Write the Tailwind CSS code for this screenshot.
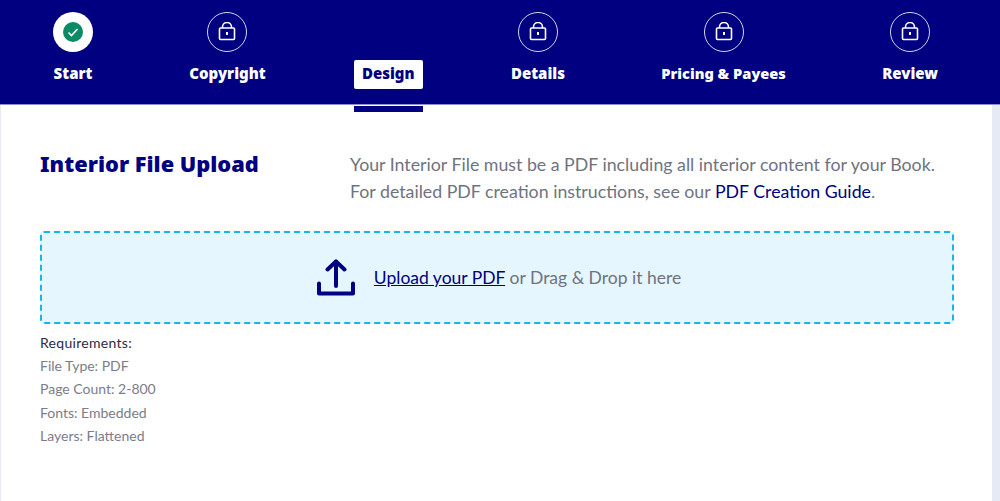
<!DOCTYPE html>
<html lang="en">

<head>
    <meta charset="UTF-8">
    <title>Interior File Upload</title>
    <script src="https://cdn.jsdelivr.net/npm/@tailwindcss/browser@4"></script>
</head>

<body class="bg-white font-['Lato',sans-serif] h-[501px] overflow-hidden">

    <!-- Steps -->
    <nav class="h-[105px] bg-[#000080] border-b border-[#8f8fd0] pl-[53px] pr-[62px] pt-3 flex justify-between font-['Noto_Sans',sans-serif]">
        <div class="flex flex-col items-center">
            <div class="w-10 h-10 rounded-full bg-white grid place-items-center">
                <svg class="w-5 h-5" viewBox="0 0 20 20">
                    <circle cx="10" cy="10" r="10" fill="#0b8a66" />
                    <path d="M5.5 10.5l3 3 6-6.5" fill="none" stroke="white" stroke-width="1.6" />
                </svg>
            </div>
            <span class="mt-3 text-[15px] leading-[18px] font-black text-white">Start</span>
        </div>
        <div class="flex flex-col items-center">
            <div class="w-10 h-10 rounded-full border border-[#d5d5ec] grid place-items-center">
                <svg class="w-[18px] h-5 text-white" viewBox="0 0 18 20" fill="none" stroke="currentColor" stroke-width="1.6">
                    <rect x="1.500" y="6" width="15" height="11.500" rx="1" />
                    <path d="M4.500 6V5a4.500 4.500 0 0 1 9 0v1" />
                    <path d="M9 10v3" stroke-width="2" />
                </svg>
            </div>
            <span class="mt-3 text-[15px] leading-[18px] font-black text-white">Copyright</span>
        </div>
        <div class="relative flex flex-col items-center">
            <div class="h-10"></div>
            <span class="mt-2 -mx-2 px-2 pt-1 pb-[7px] rounded-[2px] bg-white text-[15px] leading-[18px] font-black text-[#000080]">Design</span>
            <span class="absolute -left-2 -right-2 top-[94px] h-[6px] bg-[#000080]"></span>
        </div>
        <div class="flex flex-col items-center">
            <div class="w-10 h-10 rounded-full border border-[#d5d5ec] grid place-items-center">
                <svg class="w-[18px] h-5 text-white" viewBox="0 0 18 20" fill="none" stroke="currentColor" stroke-width="1.6">
                    <rect x="1.500" y="6" width="15" height="11.500" rx="1" />
                    <path d="M4.500 6V5a4.500 4.500 0 0 1 9 0v1" />
                    <path d="M9 10v3" stroke-width="2" />
                </svg>
            </div>
            <span class="mt-3 text-[15px] leading-[18px] font-black text-white">Details</span>
        </div>
        <div class="flex flex-col items-center">
            <div class="w-10 h-10 rounded-full border border-[#d5d5ec] grid place-items-center">
                <svg class="w-[18px] h-5 text-white" viewBox="0 0 18 20" fill="none" stroke="currentColor" stroke-width="1.6">
                    <rect x="1.500" y="6" width="15" height="11.500" rx="1" />
                    <path d="M4.500 6V5a4.500 4.500 0 0 1 9 0v1" />
                    <path d="M9 10v3" stroke-width="2" />
                </svg>
            </div>
            <span class="mt-3 text-[14.6px] leading-[18px] font-black text-white">Pricing &amp; Payees</span>
        </div>
        <div class="flex flex-col items-center">
            <div class="w-10 h-10 rounded-full border border-[#d5d5ec] grid place-items-center">
                <svg class="w-[18px] h-5 text-white" viewBox="0 0 18 20" fill="none" stroke="currentColor" stroke-width="1.6">
                    <rect x="1.500" y="6" width="15" height="11.500" rx="1" />
                    <path d="M4.500 6V5a4.500 4.500 0 0 1 9 0v1" />
                    <path d="M9 10v3" stroke-width="2" />
                </svg>
            </div>
            <span class="mt-3 text-[15px] leading-[18px] font-black text-white">Review</span>
        </div>
    </nav>

    <!-- Content -->
    <main class="h-[396px] mr-2 border-l border-[#e6eaf4] pl-[39px] pr-[38px]">
        <div class="flex pt-[46px]">
            <h1 class="w-[310px] -mt-px font-['Noto_Sans',sans-serif] text-[21.8px] leading-[27px] font-black text-[#000080]">Interior File Upload</h1>
            <p class="text-[17.75px] leading-[27px] text-[#6f7380]">
                Your Interior File must be a PDF including all interior content for your Book.<br>
                For detailed PDF creation instructions, see our <a class="text-[#000080]" href="#">PDF Creation Guide</a>.
            </p>
        </div>

        <div class="mt-[26px] h-[93px] bg-[#e6f6fe] border-2 border-dashed border-[#16b5ee] rounded-sm flex items-center justify-center gap-[19px] pl-1">
            <svg class="w-[38px] h-[37px] text-[#000080]" viewBox="0 0 38 37" fill="none" stroke="currentColor" stroke-width="4" stroke-linecap="round" stroke-linejoin="round">
                <path d="M19 2.500V27" />
                <path d="M10.500 10.500L19 2.500l8.500 8" />
                <path d="M2 24.500V34.500H36V24.500" />
            </svg>
            <p class="mt-[2px] text-[17.5px] text-[#6f7380]"><a class="text-[#000080] underline" href="#">Upload your PDF</a> or Drag &amp; Drop it here</p>
        </div>

        <div class="mt-[7px] text-[14px] leading-[23.2px] text-[#7a7d89]">
            <p class="text-[#2b2b45] tracking-[0.3px]">Requirements:</p>
            <p>File Type: PDF</p>
            <p>Page Count: 2-800</p>
            <p>Fonts: Embedded</p>
            <p>Layers: Flattened</p>
        </div>
    </main>
    <div class="fixed top-[105px] right-0 bottom-0 w-2 bg-[#e6eaf4]"></div>

</body>

</html>
